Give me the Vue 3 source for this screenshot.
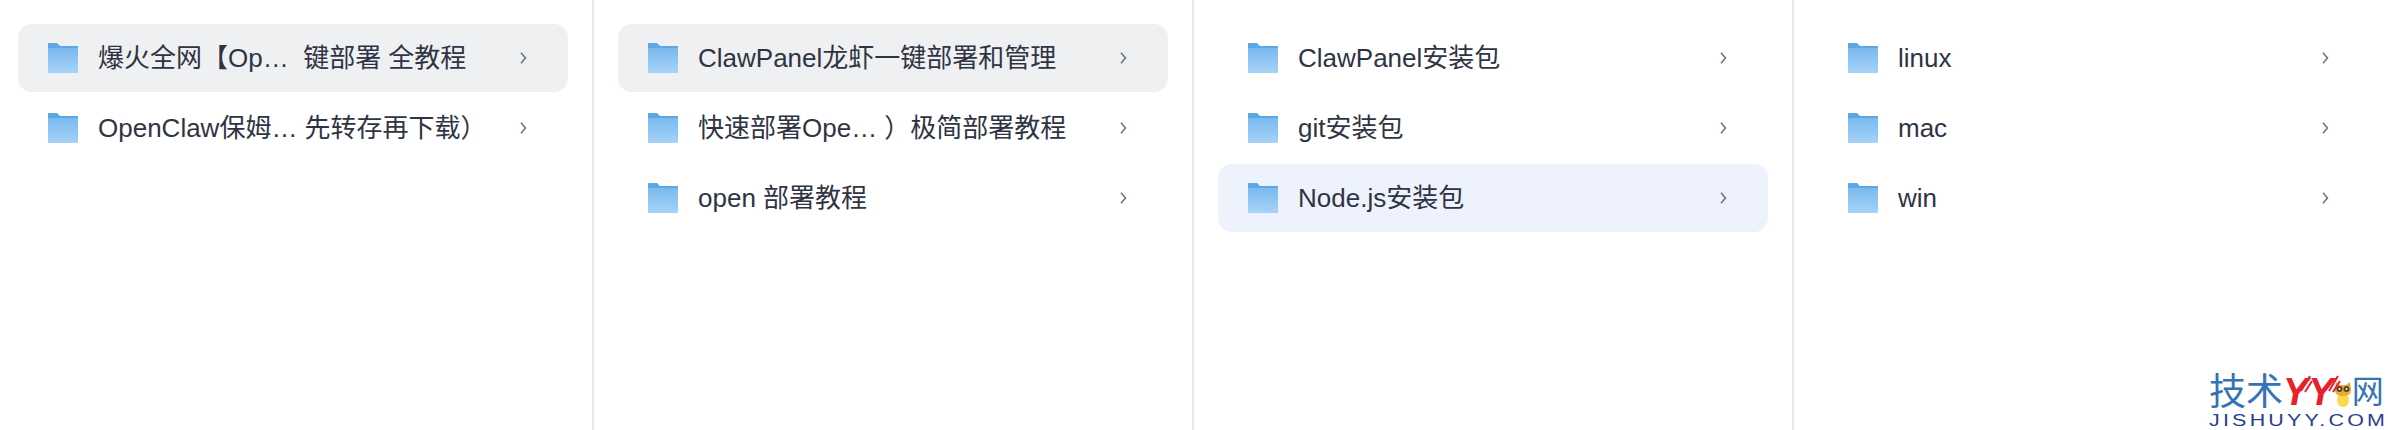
<script setup>
const columns = [
  { items: [
    { name: '爆火全网【Op…  键部署 全教程', state: 'open' },
    { name: 'OpenClaw保姆… 先转存再下载）' }
  ] },
  { items: [
    { name: 'ClawPanel龙虾一键部署和管理', state: 'open' },
    { name: '快速部署Ope… ）极简部署教程' },
    { name: 'open 部署教程' }
  ] },
  { items: [
    { name: 'ClawPanel安装包' },
    { name: 'git安装包' },
    { name: 'Node.js安装包', state: 'active' }
  ] },
  { items: [
    { name: 'linux' },
    { name: 'mac' },
    { name: 'win' }
  ] }
]
</script>

<template>
  <div class="browser">
    <svg class="defs" width="0" height="0">
      <defs>
        <linearGradient id="folder-body" x1="0" y1="0" x2="0" y2="1">
          <stop offset="0" stop-color="#7ab9ee" />
          <stop offset="1" stop-color="#a6d3f8" />
        </linearGradient>
      </defs>
    </svg>
    <div class="columns">
      <div v-for="(col, i) in columns" :key="i" class="column">
        <div v-for="item in col.items" :key="item.name" class="row" :class="item.state">
          <svg class="folder" viewBox="0 0 30 30" width="30" height="30">
            <path d="M0 1 Q0 0 1 0 H9 L12 3 H30 V30 H0 Z" fill="#5da8e4" />
            <rect x="0" y="5" width="30" height="25" fill="url(#folder-body)" />
          </svg>
          <span class="name">{{ item.name }}</span>
          <svg class="chevron" viewBox="0 0 7 12" width="7" height="12">
            <path d="M1 0.8 L5.5 6 L1 11.2" fill="none" stroke="#6b7078" stroke-width="1.5" />
          </svg>
        </div>
      </div>
    </div>
    <div class="watermark">
      <div class="logo-top">
        <span class="logo-cn">技术</span><span class="logo-yy">YY</span>
        <svg class="mascot" viewBox="0 0 18 28" width="18" height="28">
          <ellipse cx="9" cy="21" rx="6" ry="7" fill="#ffd84a" />
          <path d="M2 3 L6 6 H12 L16 3 L17 11 Q17 17 9 17 Q1 17 1 11 Z" fill="#e9ad35" />
          <circle cx="5.5" cy="10" r="3" fill="#5a4030" />
          <circle cx="12.5" cy="10" r="3" fill="#5a4030" />
          <circle cx="5.5" cy="10" r="1" fill="#fff" />
          <circle cx="12.5" cy="10" r="1" fill="#fff" />
        </svg>
        <span class="logo-cn small">网</span>
      </div>
      <div class="logo-url">JISHUYY.COM</div>
      <svg class="streaks" viewBox="0 0 176 20" width="176" height="20">
        <path d="M92 18 L101 3 M96 19 L103 8" stroke="#e8202a" stroke-width="2" fill="none" />
        <path d="M120 18 L129 3 M124 19 L131 8" stroke="#e8202a" stroke-width="2" fill="none" />
      </svg>
    </div>
  </div>
</template>

<style scoped>
.browser {
  position: relative;
  width: 2388px;
  height: 430px;
  overflow: hidden;
  background: #fff;
  font-family: "Liberation Sans", "Noto Sans CJK SC", sans-serif;
}

.defs {
  position: absolute;
}

.columns {
  display: flex;
  height: 100%;
}

.column {
  display: flex;
  flex-direction: column;
  gap: 2px;
  flex: none;
  width: 600px;
  padding: 24px 24px 0;
  box-sizing: border-box;
  border-right: 2px solid #e6e7ea;
}

.column:first-child {
  width: 594px;
  padding-left: 18px;
}

.column:last-child {
  width: 594px;
  padding-right: 18px;
  border-right: none;
}

.row {
  display: flex;
  align-items: center;
  height: 68px;
  padding: 0 41px 0 30px;
  border-radius: 14px;
  color: #2f3444;
}

.row.open {
  background: #eff0f2;
}

.row.active {
  background: #eef2fd;
}

.folder {
  flex: none;
  margin-right: 20px;
}

.name {
  flex: 1;
  font-size: 26px;
  line-height: 36px;
  white-space: pre;
  overflow: hidden;
}

.chevron {
  flex: none;
}

.watermark {
  position: absolute;
  left: 2209px;
  top: 373px;
  width: 179px;
}

.logo-top {
  display: flex;
  align-items: center;
  height: 39px;
  width: 190px;
  white-space: nowrap;
}

.logo-cn {
  flex: none;
  font-size: 37px;
  line-height: 39px;
  color: #3473b8;
}

.logo-cn.small {
  font-size: 32px;
}

.logo-yy {
  flex: none;
  font-size: 38px;
  line-height: 39px;
  font-weight: 700;
  font-style: italic;
  color: #e8202a;
}

.mascot {
  flex: none;
}

.logo-url {
  font-size: 16px;
  line-height: 18px;
  letter-spacing: 2.4px;
  color: #2b3d8f;
  white-space: nowrap;
  transform: scaleX(1.34);
  transform-origin: left center;
}

.streaks {
  position: absolute;
  left: 0;
  top: 0;
}
</style>
